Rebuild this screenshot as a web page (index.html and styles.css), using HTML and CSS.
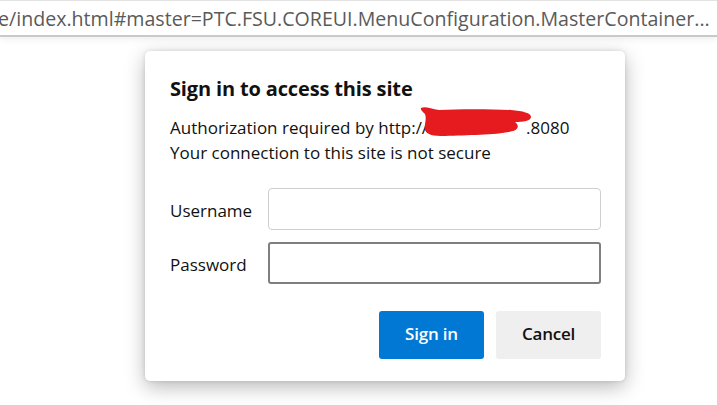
FILE: index.html
```html
<!DOCTYPE html>
<html>
<head>
<meta charset="utf-8">
<link rel="stylesheet" href="styles.css">
</head>
<body>
<div class="urlbar"><span class="url">e/index.html#master=PTC.FSU.COREUI.MenuConfiguration.MasterContainer...</span></div>
<div class="page">
  <div class="dialog">
    <h1 class="title">Sign in to access this site</h1>
    <div class="info">
      <p class="line">Authorization required by http://<span class="hidden"></span>.8080
        <svg class="scribble" viewBox="0 0 120 34" width="120" height="34"><path d="M2 2 C6 0 12 3 20 4 C40 3 70 3 92 4 C104 5 112 7 112 11 C112 15 104 16 96 16 C100 19 100 23 94 25 C80 29 50 29 26 30 C14 30 8 29 6 24 C5 18 8 14 6 8 C4 6 1 4 2 2 Z" fill="#e51b1f"/></svg>
      </p>
      <p class="line">Your connection to this site is not secure</p>
    </div>
    <div class="form">
      <label class="label">Username</label>
      <div class="input"></div>
      <label class="label">Password</label>
      <div class="input focus"></div>
    </div>
    <div class="actions">
      <button class="btn primary">Sign in</button>
      <button class="btn secondary">Cancel</button>
    </div>
  </div>
</div>
</body>
</html>
```
FILE: styles.css
```css
html, body {
  margin: 0;
  padding: 0;
  background: #ffffff;
  overflow: hidden;
}
body {
  font-family: "Open Sans", "Noto Sans", sans-serif;
  width: 717px;
  height: 405px;
}
.urlbar {
  height: 34px;
  border-top: 1px solid #e3e3e3;
  border-bottom: 2px solid #c9c9c9;
  box-shadow: 0 3px 6px rgba(0,0,0,0.06);
  white-space: nowrap;
  overflow: hidden;
  display: flex;
  align-items: center;
}
.url {
  font-size: 19.6px;
  color: #5a5a5a;
  margin-left: -2px;
  letter-spacing: 0;
}
.page {
  padding-top: 14px;
  padding-left: 145px;
}
.dialog {
  width: 480px;
  height: 330px;
  box-sizing: border-box;
  background: #fff;
  border-radius: 5px;
  box-shadow: 0 6px 20px rgba(0,0,0,0.28), 0 0 4px rgba(0,0,0,0.12);
  padding: 25px 24px 0 25px;
  color: #111;
}
.title {
  margin: 0;
  font-size: 20px;
  font-weight: 700;
  line-height: 26px;
  letter-spacing: -0.15px;
}
.info {
  margin-top: 13px;
}
.line {
  margin: 0;
  font-size: 17px;
  line-height: 25px;
  position: relative;
  letter-spacing: 0;
}
.hidden {
  display: inline-block;
  width: 98px;
  height: 1px;
}
.scribble {
  position: absolute;
  left: 249px;
  top: -9px;
}
.form {
  margin-top: 23px;
  display: grid;
  grid-template-columns: 98px 1fr;
  row-gap: 12px;
  align-items: center;
}
.label {
  font-size: 17px;
  letter-spacing: 0;
  color: #111;
  padding-top: 3px;
}
.input {
  height: 42px;
  box-sizing: border-box;
  border: 1px solid #cfcfcf;
  border-radius: 4px;
}
.input.focus {
  border: 2px solid #7f7f7f;
  border-radius: 3px;
}
.actions {
  margin-top: 27px;
  display: flex;
  justify-content: flex-end;
  gap: 12px;
}
.btn {
  width: 105px;
  height: 48px;
  border: none;
  border-radius: 3px;
  font-family: "Open Sans", "Noto Sans", sans-serif;
  font-size: 17px;
  font-weight: 600;
  letter-spacing: -0.2px;
  padding: 0 0 3px;
}
.primary {
  background: #0078d4;
  color: #fff;
}
.secondary {
  background: #efefef;
  color: #111;
}
```
